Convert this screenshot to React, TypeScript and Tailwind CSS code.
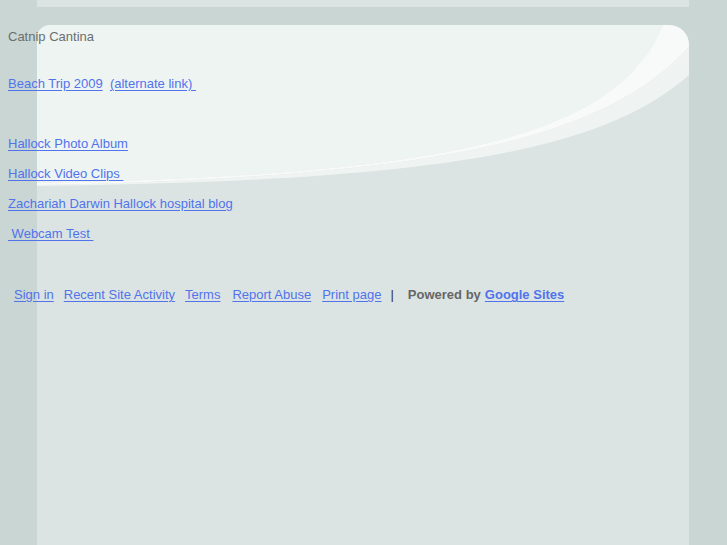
import React from "react";

const link = "text-[#5173ec] underline underline-offset-2";

function Backdrop() {
  return (
    <div className="absolute inset-0 pointer-events-none">
      <div className="absolute left-[37px] top-0 h-[7px] w-[652px] bg-[#dbe4e2]" />
      <div className="absolute left-[37px] top-[25px] bottom-0 w-[652px] overflow-hidden rounded-tl-[13px] rounded-tr-[20px] bg-[#dbe4e2]">
        <svg width="652" height="200" viewBox="0 0 652 200" className="block">
          <path d="M0 0 H626 C580 110 420 150 0 158 Z" fill="#eef4f2" />
          <path d="M626 0 H652 V22 C570 110 420 152 0 160 L0 158 C420 150 580 110 626 0 Z" fill="#f7faf9" />
          <path d="M652 22 V50 C570 122 420 156 0 161 V160 C420 152 570 110 652 22 Z" fill="#eff4f2" />
        </svg>
      </div>
    </div>
  );
}

export default function App() {
  return (
    <div className="relative min-h-[545px] overflow-hidden bg-[#c9d6d3] font-['Liberation_Sans',Arial,sans-serif] text-[13px] leading-[16px]">
      <Backdrop />
      <div className="relative flex flex-col items-start pl-2 pt-[29px]">
        <div className="text-[#6b6f6e]">Catnip Cantina</div>

        <div className="mt-[31px] whitespace-pre">
          <a href="#" className={link}>Beach Trip 2009</a>
          <span>  </span>
          <a href="#" className={link}>(alternate link) </a>
        </div>

        <a href="#" className={`${link} mt-[44px] whitespace-pre`}>Hallock Photo Album</a>
        <a href="#" className={`${link} mt-[14px] whitespace-pre`}>Hallock Video Clips </a>
        <a href="#" className={`${link} mt-[14px] whitespace-pre`}>Zachariah Darwin Hallock hospital blog</a>
        <a href="#" className={`${link} mt-[14px] whitespace-pre`}> Webcam Test </a>

        <div className="mt-[45px] ml-[6px] flex items-center whitespace-pre">
          <a href="#" className={link}>Sign in</a>
          <a href="#" className={`${link} ml-[10px]`}>Recent Site Activity</a>
          <a href="#" className={`${link} ml-[10px]`}>Terms</a>
          <a href="#" className={`${link} ml-[12px]`}>Report Abuse</a>
          <a href="#" className={`${link} ml-[11px]`}>Print page</a>
          <span className="ml-[9px] text-[#333]">|</span>
          <span className="ml-[14px] font-bold text-[#666]">Powered by</span>
          <a href="#" className={`${link} ml-[4px] font-bold`}>Google Sites</a>
        </div>
      </div>
    </div>
  );
}
